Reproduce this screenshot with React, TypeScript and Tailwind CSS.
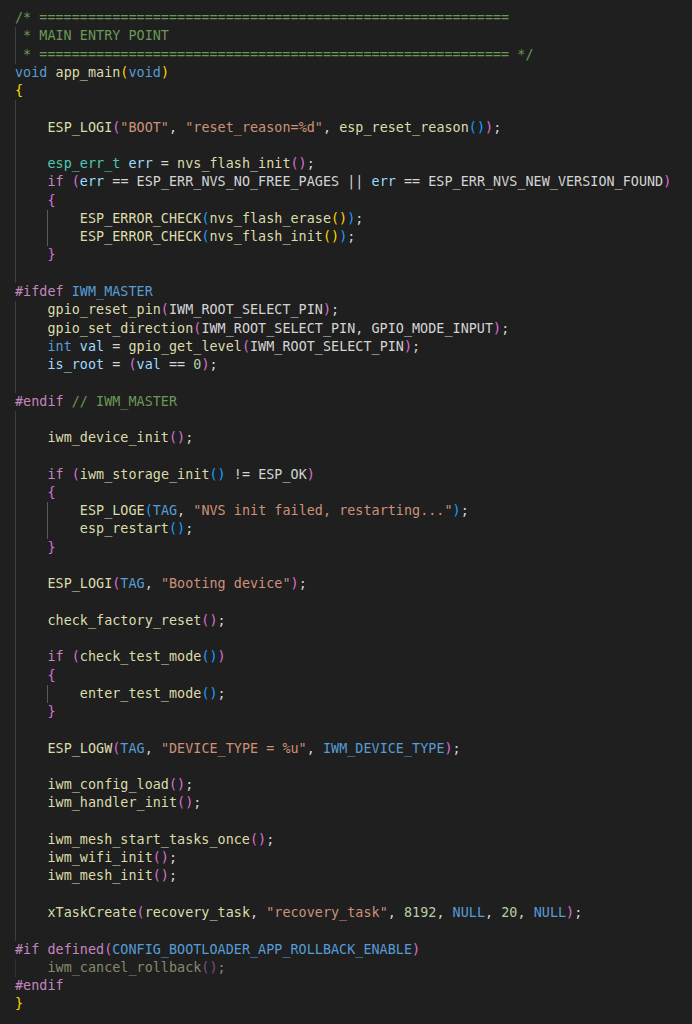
import React from "react";

const C: Record<string, string> = {
  c: "text-[#6a9955]",
  k: "text-[#569cd6]",
  f: "text-[#dcdcaa]",
  s: "text-[#ce9178]",
  v: "text-[#9cdcfe]",
  t: "text-[#4ec9b0]",
  p: "text-[#c586c0]",
  n: "text-[#b5cea8]",
  d: "text-[#d4d4d4]",
  b1: "text-[#ffd700]",
  b2: "text-[#da70d6]",
  b3: "text-[#179fff]",
};

type Tok = [string, string];
type Line = { g?: number; ind?: string; t: Tok[]; dim?: boolean };

const EQ = "=".repeat(58);

const lines: Line[] = [
  { t: [["c", "/* " + EQ]] },
  { g: 1, ind: " ", t: [["c", "* MAIN ENTRY POINT"]] },
  { g: 1, ind: " ", t: [["c", "* " + EQ + " */"]] },
  { t: [["k", "void"], ["d", " "], ["f", "app_main"], ["b1", "("], ["k", "void"], ["b1", ")"]] },
  { t: [["b1", "{"]] },
  { g: 1, t: [] },
  { g: 1, t: [["f", "ESP_LOGI"], ["b2", "("], ["s", "\"BOOT\""], ["d", ", "], ["s", "\"reset_reason=%d\""], ["d", ", "], ["f", "esp_reset_reason"], ["b3", "()"], ["b2", ")"], ["d", ";"]] },
  { g: 1, t: [] },
  { g: 1, t: [["t", "esp_err_t"], ["d", " "], ["v", "err"], ["d", " = "], ["f", "nvs_flash_init"], ["b2", "()"], ["d", ";"]] },
  { g: 1, t: [["p", "if"], ["d", " "], ["b2", "("], ["v", "err"], ["d", " == ESP_ERR_NVS_NO_FREE_PAGES || "], ["v", "err"], ["d", " == ESP_ERR_NVS_NEW_VERSION_FOUND"], ["b2", ")"]] },
  { g: 1, t: [["b2", "{"]] },
  { g: 2, t: [["f", "ESP_ERROR_CHECK"], ["b3", "("], ["f", "nvs_flash_erase"], ["b1", "()"], ["b3", ")"], ["d", ";"]] },
  { g: 2, t: [["f", "ESP_ERROR_CHECK"], ["b3", "("], ["f", "nvs_flash_init"], ["b1", "()"], ["b3", ")"], ["d", ";"]] },
  { g: 1, t: [["b2", "}"]] },
  { g: 1, t: [] },
  { t: [["p", "#ifdef"], ["d", " "], ["k", "IWM_MASTER"]] },
  { g: 1, t: [["f", "gpio_reset_pin"], ["b2", "("], ["d", "IWM_ROOT_SELECT_PIN"], ["b2", ")"], ["d", ";"]] },
  { g: 1, t: [["f", "gpio_set_direction"], ["b2", "("], ["d", "IWM_ROOT_SELECT_PIN, GPIO_MODE_INPUT"], ["b2", ")"], ["d", ";"]] },
  { g: 1, t: [["k", "int"], ["d", " "], ["v", "val"], ["d", " = "], ["f", "gpio_get_level"], ["b2", "("], ["d", "IWM_ROOT_SELECT_PIN"], ["b2", ")"], ["d", ";"]] },
  { g: 1, t: [["v", "is_root"], ["d", " = "], ["b2", "("], ["v", "val"], ["d", " == "], ["n", "0"], ["b2", ")"], ["d", ";"]] },
  { g: 1, t: [] },
  { t: [["p", "#endif"], ["d", " "], ["c", "// IWM_MASTER"]] },
  { g: 1, t: [] },
  { g: 1, t: [["f", "iwm_device_init"], ["b2", "()"], ["d", ";"]] },
  { g: 1, t: [] },
  { g: 1, t: [["p", "if"], ["d", " "], ["b2", "("], ["f", "iwm_storage_init"], ["b3", "()"], ["d", " != ESP_OK"], ["b2", ")"]] },
  { g: 1, t: [["b2", "{"]] },
  { g: 2, t: [["f", "ESP_LOGE"], ["b3", "("], ["k", "TAG"], ["d", ", "], ["s", "\"NVS init failed, restarting...\""], ["b3", ")"], ["d", ";"]] },
  { g: 2, t: [["f", "esp_restart"], ["b3", "()"], ["d", ";"]] },
  { g: 1, t: [["b2", "}"]] },
  { g: 1, t: [] },
  { g: 1, t: [["f", "ESP_LOGI"], ["b2", "("], ["k", "TAG"], ["d", ", "], ["s", "\"Booting device\""], ["b2", ")"], ["d", ";"]] },
  { g: 1, t: [] },
  { g: 1, t: [["f", "check_factory_reset"], ["b2", "()"], ["d", ";"]] },
  { g: 1, t: [] },
  { g: 1, t: [["p", "if"], ["d", " "], ["b2", "("], ["f", "check_test_mode"], ["b3", "()"], ["b2", ")"]] },
  { g: 1, t: [["b2", "{"]] },
  { g: 2, t: [["f", "enter_test_mode"], ["b3", "()"], ["d", ";"]] },
  { g: 1, t: [["b2", "}"]] },
  { g: 1, t: [] },
  { g: 1, t: [["f", "ESP_LOGW"], ["b2", "("], ["k", "TAG"], ["d", ", "], ["s", "\"DEVICE_TYPE = %u\""], ["d", ", "], ["k", "IWM_DEVICE_TYPE"], ["b2", ")"], ["d", ";"]] },
  { g: 1, t: [] },
  { g: 1, t: [["f", "iwm_config_load"], ["b2", "()"], ["d", ";"]] },
  { g: 1, t: [["f", "iwm_handler_init"], ["b2", "()"], ["d", ";"]] },
  { g: 1, t: [] },
  { g: 1, t: [["f", "iwm_mesh_start_tasks_once"], ["b2", "()"], ["d", ";"]] },
  { g: 1, t: [["f", "iwm_wifi_init"], ["b2", "()"], ["d", ";"]] },
  { g: 1, t: [["f", "iwm_mesh_init"], ["b2", "()"], ["d", ";"]] },
  { g: 1, t: [] },
  { g: 1, t: [["f", "xTaskCreate"], ["b2", "("], ["f", "recovery_task"], ["d", ", "], ["s", "\"recovery_task\""], ["d", ", "], ["n", "8192"], ["d", ", "], ["k", "NULL"], ["d", ", "], ["n", "20"], ["d", ", "], ["k", "NULL"], ["b2", ")"], ["d", ";"]] },
  { g: 1, t: [] },
  { t: [["p", "#if"], ["d", " "], ["p", "defined"], ["b2", "("], ["k", "CONFIG_BOOTLOADER_APP_ROLLBACK_ENABLE"], ["b2", ")"]] },
  { g: 1, dim: true, t: [["f", "iwm_cancel_rollback"], ["b2", "()"], ["d", ";"]] },
  { t: [["p", "#endif"]] },
  { t: [["b1", "}"]] },
];

function CodeLine({ line }: { line: Line }) {
  const g = line.g ?? 0;
  const guides: React.ReactNode[] = [];
  for (let i = 0; i < g; i++) {
    const text = i === 0 && line.ind !== undefined ? line.ind : "    ";
    guides.push(
      <span
        key={"g" + i}
        className={
          i === 0
            ? "shadow-[inset_1px_0_0_#404040]"
            : "shadow-[inset_1px_0_0_#5a5a5a]"
        }
      >
        {text}
      </span>
    );
  }
  return (
    <div className={"flex h-[18.27px] leading-[18.27px] whitespace-pre" + (line.dim ? " opacity-55" : "")}>
      {guides}
      {line.t.map(([k, txt], i) => (
        <span key={i} className={C[k]}>
          {txt}
        </span>
      ))}
    </div>
  );
}

export default function App() {
  return (
    <div className="min-h-screen w-full bg-[#1f1f1f] pt-[9px] pl-[15px] font-['DejaVu_Sans_Mono',monospace] text-[13.4px] tracking-[0.04px] text-[#d4d4d4]">
      {lines.map((l, i) => (
        <CodeLine key={i} line={l} />
      ))}
    </div>
  );
}
